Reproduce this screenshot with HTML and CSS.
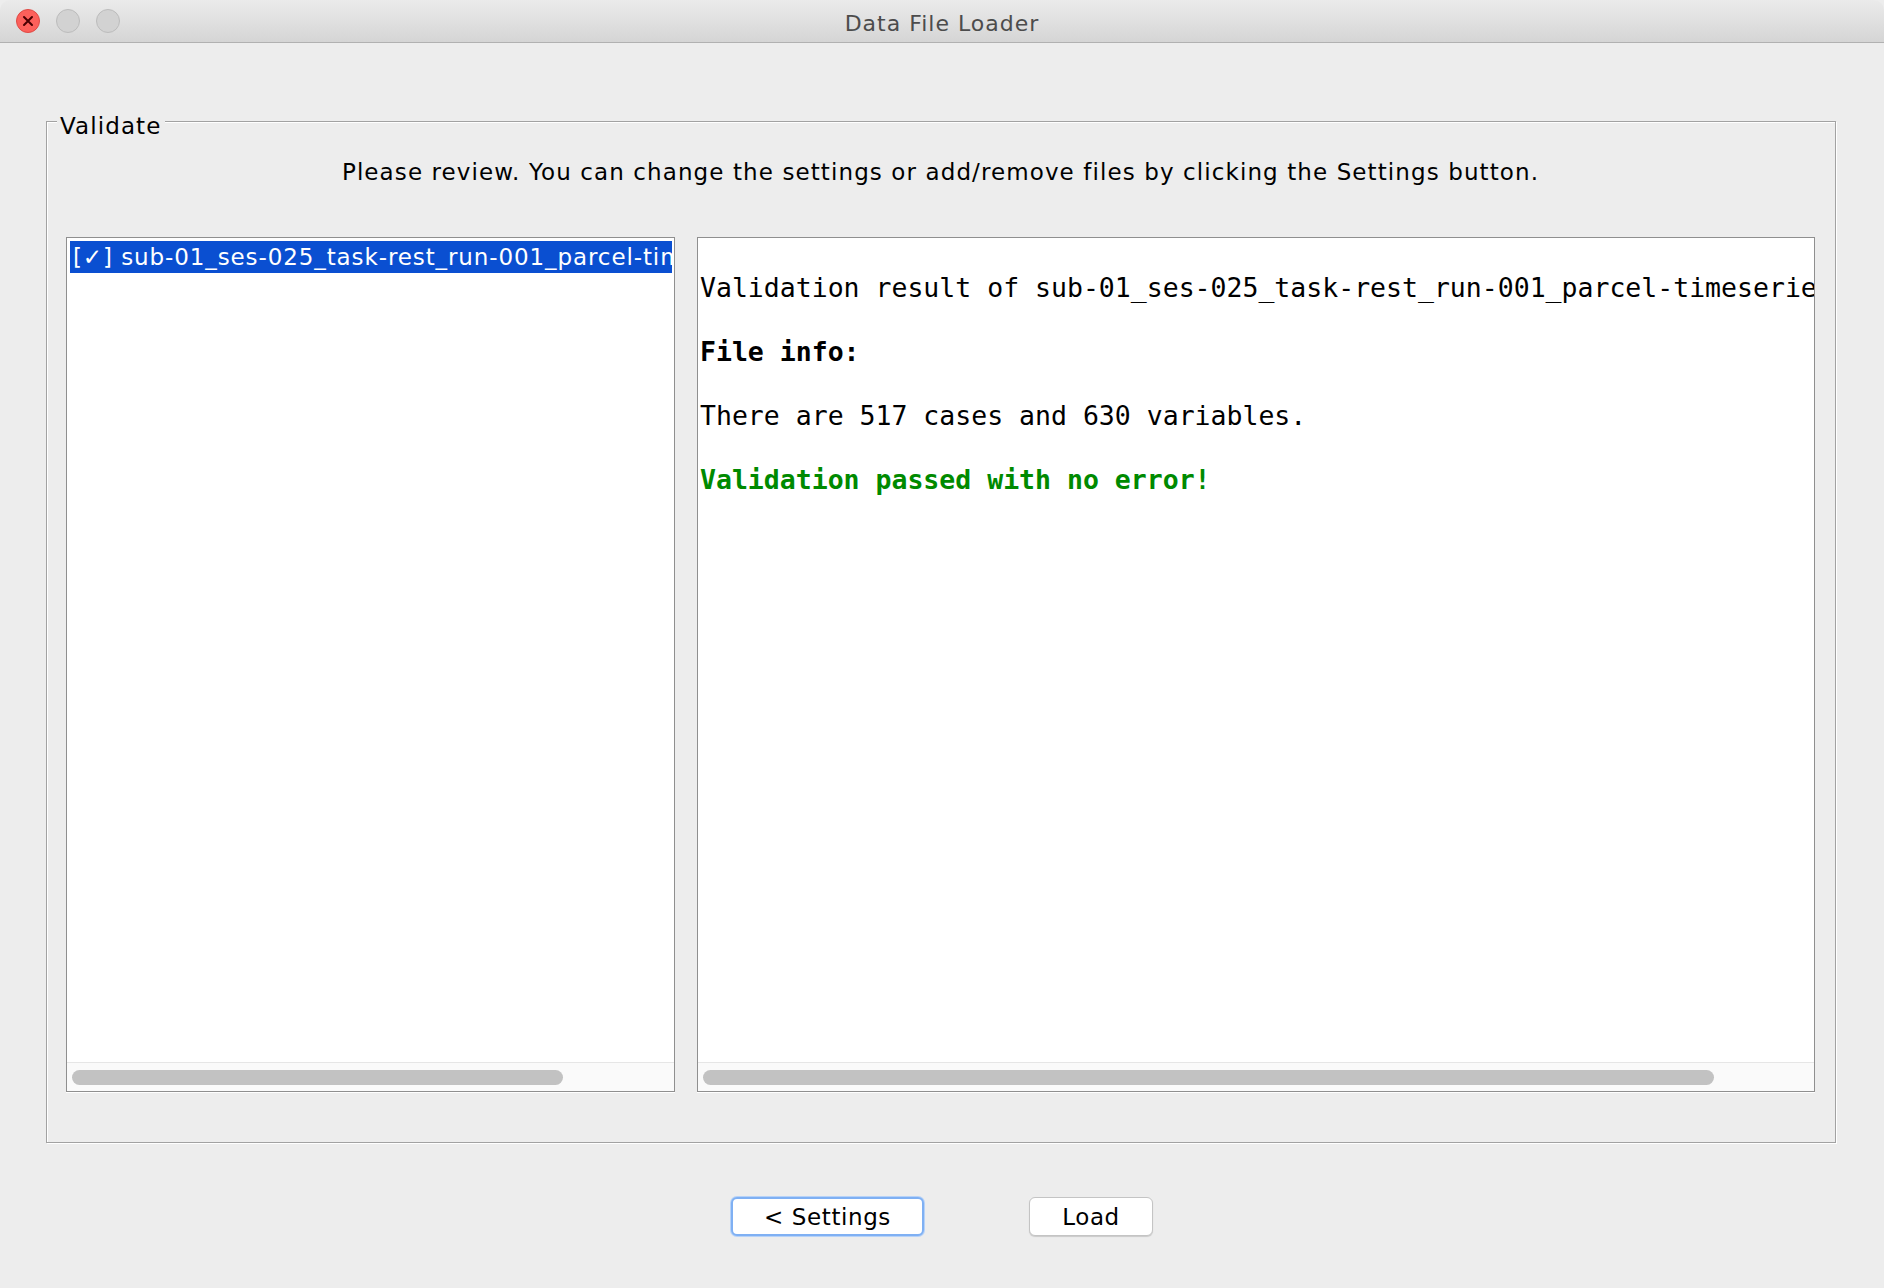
FILE: index.html
```html
<!DOCTYPE html>
<html>
<head>
<meta charset="utf-8">
<title>Data File Loader</title>
<link rel="stylesheet" href="styles.css">
</head>
<body>
<div class="window">
  <div class="titlebar">
    <div class="lights">
      <span class="light close"><svg width="14" height="14" viewBox="0 0 14 14"><path d="M3 3 L11 11 M11 3 L3 11" stroke="#4a0002" stroke-width="2" stroke-linecap="round"/></svg></span>
      <span class="light"></span>
      <span class="light"></span>
    </div>
    <div class="title">Data File Loader</div>
  </div>
  <div class="content">
    <div class="group">
      <span class="legend">Validate</span>
      <div class="instruction">Please review. You can change the settings or add/remove files by clicking the Settings button.</div>
      <div class="panels">
        <div class="pane list-pane">
          <div class="viewport">
            <div class="row selected">[✓] sub-01_ses-025_task-rest_run-001_parcel-timeseries.txt</div>
          </div>
          <div class="hscroll"><div class="thumb thumb-left"></div></div>
        </div>
        <div class="pane result-pane">
          <div class="viewport result">
            <p>Validation result of sub-01_ses-025_task-rest_run-001_parcel-timeseries.txt</p>
            <p class="bold">File info:</p>
            <p>There are 517 cases and 630 variables.</p>
            <p class="bold ok">Validation passed with no error!</p>
          </div>
          <div class="hscroll"><div class="thumb thumb-right"></div></div>
        </div>
      </div>
    </div>
    <div class="buttons">
      <button class="btn focused">&lt; Settings</button>
      <button class="btn load">Load</button>
    </div>
  </div>
</div>
</body>
</html>
```
FILE: styles.css
```css
html, body {
  margin: 0;
  padding: 0;
  background: #ededed;
}
body {
  font-family: "DejaVu Sans", "Lucida Grande", sans-serif;
  color: #000;
}
.window {
  width: 1884px;
  height: 1288px;
  display: flex;
  flex-direction: column;
  background: #ededed;
}
.titlebar {
  height: 42px;
  flex: none;
  position: relative;
  background: linear-gradient(#ebebeb, #d5d5d5);
  border-bottom: 1px solid #b1b1b1;
  border-radius: 10px 10px 0 0;
  display: flex;
  align-items: center;
  justify-content: center;
}
.lights {
  position: absolute;
  left: 16px;
  top: 9px;
  display: flex;
  gap: 16px;
}
.light {
  width: 22px;
  height: 22px;
  border-radius: 50%;
  background: #d2d2d2;
  border: 1px solid #bcbcbc;
  display: flex;
  align-items: center;
  justify-content: center;
}
.light.close {
  background: #fc605b;
  border-color: #df4a44;
}
.title {
  font-family: "DejaVu Sans", sans-serif;
  font-size: 22px;
  letter-spacing: 1px;
  color: #4c4c4c;
  margin-top: 5px;
}
.content {
  padding: 78px 48px 0 46px;
  display: flex;
  flex-direction: column;
}
.group {
  position: relative;
  height: 1020px;
  border: 1px solid #a2a2a2;
  box-shadow: 1px 1px 0 #fff, inset 1px 1px 0 #fff;
  padding: 0 20px 0 19px;
  display: flex;
  flex-direction: column;
}
.legend {
  position: absolute;
  left: 10px;
  top: -12px;
  padding: 0 3px;
  background: #ededed;
  font-size: 23px;
  letter-spacing: 1.1px;
  line-height: 32px;
}
.instruction {
  font-size: 23px;
  letter-spacing: 1.1px;
  text-align: center;
  margin-top: 35px;
  line-height: 30px;
  height: 30px;
}
.panels {
  margin-top: 50px;
  display: flex;
  gap: 22px;
  height: 855px;
}
.pane {
  background: #fff;
  border: 1px solid #8f8f8f;
  box-shadow: 0 1px 0 #fff;
  display: flex;
  flex-direction: column;
  overflow: hidden;
}
.list-pane {
  width: 607px;
  flex: none;
}
.result-pane {
  flex: 1;
}
.viewport {
  flex: 1;
  overflow: hidden;
}
.row {
  white-space: nowrap;
  overflow: hidden;
  font-size: 23px;
  letter-spacing: 0.9px;
  line-height: 32px;
  height: 32px;
  margin: 3px 2px 0 3px;
  padding-left: 3px;
}
.row.selected {
  background: #0a4fd1;
  color: #fff;
}
.result {
  padding: 18px 0 0 2px;
  font-family: "DejaVu Sans Mono", monospace;
  font-size: 26.5px;
  white-space: nowrap;
}
.result p {
  margin: 0;
  line-height: 64px;
  height: 64px;
}
.result .bold {
  font-weight: bold;
}
.result .ok {
  color: #008a00;
}
.hscroll {
  flex: none;
  background: #fafafa;
  border-top: 1px solid #e6e6e6;
  padding: 7px 5px 0 5px;
  box-sizing: border-box;
  height: 29px;
}
.thumb {
  height: 15px;
  border-radius: 8px;
  background: #c2c2c2;
}
.thumb-left {
  width: 491px;
}
.thumb-right {
  width: 1011px;
}
.buttons {
  display: flex;
  justify-content: center;
  gap: 105px;
  margin-top: 54px;
  padding-left: 2px;
}
.btn {
  font-family: "DejaVu Sans", sans-serif;
  font-size: 23px;
  letter-spacing: 0.6px;
  height: 39px;
  background: #fff;
  border: 1px solid #c4c4c4;
  border-radius: 6px;
  box-shadow: 0 1px 1px rgba(0,0,0,0.15);
  color: #000;
  padding: 0;
}
.btn.focused {
  width: 193px;
  border: 2px solid #7fb0f3;
  box-shadow: 0 0 0 1px #b6d2f8;
}
.btn.load {
  width: 124px;
}
```
